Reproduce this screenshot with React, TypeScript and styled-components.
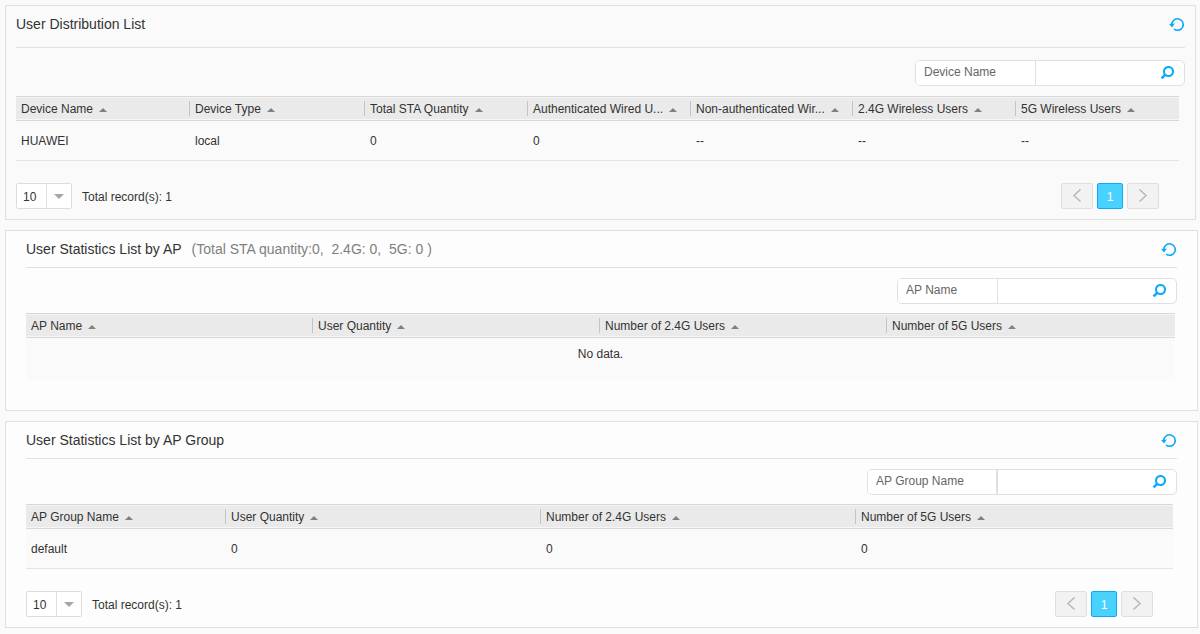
import React from "react";
import styled, { createGlobalStyle } from "styled-components";

const GlobalStyle = createGlobalStyle`
  *, *::before, *::after { box-sizing: border-box; }
  body {
    margin: 0;
    background: #fafafa;
    color: #333;
    font-family: Arial, "Liberation Sans", sans-serif;
    font-size: 12px;
    line-height: 16px;
  }
  button, input, select { font: inherit; color: inherit; margin: 0; padding: 0; }
`;

const Page = styled.main`
  display: flex;
  flex-direction: column;
  gap: 10px;
  padding: 5px 2px 6px 5px;
`;

const Panel = styled.section<{ $compact?: boolean; $bottom: number }>`
  border: 1px solid #e0e0e0;
  background: ${(p) => (p.$compact ? "#fafafa" : "#fdfdfd")};
  padding: 0 ${(p) => (p.$compact ? 10 : 20)}px ${(p) => p.$bottom}px;
  margin-right: ${(p) => (p.$compact ? 2 : 0)}px;
`;

const PanelHeader = styled.header<{ $compact?: boolean }>`
  display: flex;
  justify-content: space-between;
  align-items: center;
  padding-bottom: ${(p) => (p.$compact ? 5 : 0)}px;
  border-bottom: 1px solid #e0e0e0;
`;

const Title = styled.h2`
  margin: 0;
  font-size: 14px;
  font-weight: 400;
  line-height: 36px;
`;

const Summary = styled.span`
  margin-left: 10px;
  color: #808080;
  white-space: pre;
`;

const IconButton = styled.button`
  display: flex;
  border: 0;
  background: none;
  color: #0caafb;
  cursor: pointer;
`;

const SearchRow = styled.div<{ $compact?: boolean }>`
  display: flex;
  justify-content: flex-end;
  padding: ${(p) => (p.$compact ? "12px 0 10px" : "10px 0 9px")};
`;

const SearchBox = styled.form`
  display: flex;
  height: 26px;
  border: 1px solid #e0e0e0;
  border-radius: 5px;
  background: #fff;
  overflow: hidden;
`;

const FieldSelect = styled.select<{ $width: number; $divider: number }>`
  appearance: none;
  width: ${(p) => p.$width}px;
  padding: 0 8px 2px;
  border: 0;
  border-right: ${(p) => p.$divider}px solid #e0e0e0;
  background: #fff;
  color: #666;
  outline: none;
`;

const SearchEntry = styled.div<{ $width: number }>`
  display: flex;
  align-items: center;
  width: ${(p) => p.$width}px;
  padding-right: 10px;
`;

const SearchInput = styled.input`
  flex: 1;
  min-width: 0;
  height: 100%;
  padding-left: 8px;
  border: 0;
  background: none;
  outline: none;
`;

const TableArea = styled.div<{ $inset: number }>`
  margin-right: ${(p) => p.$inset}px;
`;

const Table = styled.table`
  width: 100%;
  table-layout: fixed;
  border-collapse: separate;
  border-spacing: 0;
`;

const Col = styled.col<{ $width: number }>`
  width: ${(p) => p.$width}px;
`;

const HeadCell = styled.th`
  height: 25px;
  padding: 0;
  border: solid #d8d8d8;
  border-width: 1px 0;
  background: #eaeaea;
  box-shadow: inset 0 1px #f3f3f3, inset 0 -1px #f6f6f6;
  font-weight: 400;
  text-align: left;
`;

const SortButton = styled.button`
  display: flex;
  align-items: center;
  gap: 6px;
  height: 15px;
  padding: 2px 0 0 5px;
  border: 0;
  background: none;
  white-space: nowrap;
  line-height: 15px;
  cursor: pointer;

  ${HeadCell} + ${HeadCell} > & {
    border-left: 1px solid #c4c4c4;
  }
`;

const SortArrow = styled.span`
  border: solid transparent;
  border-width: 0 4px 4px;
  border-bottom-color: #808080;
`;

const Cell = styled.td`
  height: 40px;
  padding: 0 5px;
  border-bottom: 1px solid #e4e4e4;
  background: #fafafa;

  & + & { padding-left: 6px; }
`;

const EmptyCell = styled.td`
  height: 42px;
  padding: 0 0 10px;
  background: #fafafa;
  text-align: center;
`;

const Footer = styled.div`
  display: flex;
  align-items: center;
  gap: 10px;
  padding: 22px 20px 0 0;
`;

const Total = styled.span`
  padding-top: 2px;
`;

const SizePicker = styled.div`
  display: grid;
  width: 56px;
  height: 26px;
  border: 1px solid #dcdcdc;
  border-radius: 2px;
  background: #fff;

  & > * { grid-area: 1 / 1; }
`;

const SizeSelect = styled.select`
  appearance: none;
  width: 100%;
  height: 100%;
  padding: 2px 6px 0;
  border: 0;
  background: none;
  outline: none;
`;

const SizeArrow = styled.span`
  display: flex;
  align-items: center;
  justify-content: center;
  justify-self: end;
  width: 25px;
  border-left: 1px solid #e0e0e0;
  pointer-events: none;

  &::after {
    content: "";
    border: solid transparent;
    border-width: 5px 5px 0;
    border-top-color: #a6a6a6;
  }
`;

const Pager = styled.nav`
  display: flex;
  gap: 4px;
  margin-left: auto;
`;

const PageButton = styled.button<{ $current?: boolean }>`
  display: flex;
  align-items: center;
  justify-content: center;
  width: ${(p) => (p.$current ? 26 : 32)}px;
  height: 26px;
  padding-top: ${(p) => (p.$current ? 2 : 0)}px;
  border: 1px solid ${(p) => (p.$current ? "#0caafb" : "#dfdfdf")};
  border-radius: 2px;
  background: ${(p) => (p.$current ? "#4ad2ff" : "#f2f2f2")};
  color: ${(p) => (p.$current ? "#fff" : "#b8b8b8")};
`;

const RefreshIcon = () => (
  <svg width="16" height="16" viewBox="0 0 16 16" fill="none" aria-hidden="true">
    <path d="M2.75 8.5A5.75 5.75 0 1 1 5 13.1" stroke="currentColor" strokeWidth="1.6" />
    <path d="M0 8L5.8 7.4L3.2 11.4Z" fill="currentColor" />
  </svg>
);

const SearchIcon = () => (
  <svg width="14" height="14" viewBox="0 0 14 14" fill="none" stroke="currentColor" aria-hidden="true">
    <circle cx="8.5" cy="5.5" r="4.5" strokeWidth="2.1" />
    <path d="M5.3 8.7L1.6 12.4" strokeWidth="2.6" />
  </svg>
);

const Chevron = ({ d }: { d: string }) => (
  <svg width="10" height="14" viewBox="0 0 10 14" fill="none" stroke="currentColor" strokeWidth="1.5" aria-hidden="true">
    <path d={d} />
  </svg>
);

type Column = { label: string; width: number };

type ListPanelProps = {
  title: string;
  summary?: string;
  compact?: boolean;
  field: string;
  fieldWidth: number;
  entryWidth: number;
  divider?: number;
  inset: number;
  columns: Column[];
  rows: string[][];
};

function ListPanel(props: ListPanelProps) {
  const { title, summary, compact, field, fieldWidth, entryWidth, divider = 1, inset, columns, rows } = props;
  return (
    <Panel $compact={compact} $bottom={rows.length ? 10 : 30}>
      <PanelHeader $compact={compact}>
        <Title>
          {title}
          {summary && <Summary>{summary}</Summary>}
        </Title>
        <IconButton type="button" aria-label="Refresh">
          <RefreshIcon />
        </IconButton>
      </PanelHeader>
      <SearchRow $compact={compact}>
        <SearchBox onSubmit={(e) => e.preventDefault()}>
          <FieldSelect $width={fieldWidth} $divider={divider} aria-label="Search field">
            <option>{field}</option>
          </FieldSelect>
          <SearchEntry $width={entryWidth}>
            <SearchInput type="text" aria-label={`Search by ${field}`} />
            <IconButton type="submit" aria-label="Search">
              <SearchIcon />
            </IconButton>
          </SearchEntry>
        </SearchBox>
      </SearchRow>
      <TableArea $inset={inset}>
        <Table>
          <colgroup>
            {columns.map((c) => (
              <Col key={c.label} $width={c.width} />
            ))}
          </colgroup>
          <thead>
            <tr>
              {columns.map((c) => (
                <HeadCell key={c.label} scope="col">
                  <SortButton type="button">
                    {c.label}
                    <SortArrow />
                  </SortButton>
                </HeadCell>
              ))}
            </tr>
          </thead>
          <tbody>
            {rows.map((row) => (
              <tr key={row[0]}>
                {row.map((value, i) => (
                  <Cell key={i}>{value}</Cell>
                ))}
              </tr>
            ))}
            {rows.length === 0 && (
              <tr>
                <EmptyCell colSpan={columns.length}>No data.</EmptyCell>
              </tr>
            )}
          </tbody>
        </Table>
        {rows.length > 0 && (
          <Footer>
            <SizePicker>
              <SizeSelect aria-label="Records per page">
                <option>10</option>
              </SizeSelect>
              <SizeArrow />
            </SizePicker>
            <Total>Total record(s): {rows.length}</Total>
            <Pager aria-label="Pages">
              <PageButton type="button" aria-label="Previous page">
                <Chevron d="M8.5 0.5L2 6.5L8.5 12.5" />
              </PageButton>
              <PageButton type="button" $current aria-current="page">
                1
              </PageButton>
              <PageButton type="button" aria-label="Next page">
                <Chevron d="M1.5 0.5L8 6.5L1.5 12.5" />
              </PageButton>
            </Pager>
          </Footer>
        )}
      </TableArea>
    </Panel>
  );
}

export default function App() {
  return (
    <>
      <GlobalStyle />
      <Page>
        <ListPanel
          compact
          title="User Distribution List"
          field="Device Name"
          fieldWidth={120}
          entryWidth={148}
          inset={6}
          columns={[
            { label: "Device Name", width: 173 },
            { label: "Device Type", width: 175 },
            { label: "Total STA Quantity", width: 163 },
            { label: "Authenticated Wired U...", width: 163 },
            { label: "Non-authenticated Wir...", width: 162 },
            { label: "2.4G Wireless Users", width: 163 },
            { label: "5G Wireless Users", width: 164 },
          ]}
          rows={[["HUAWEI", "local", "0", "0", "--", "--", "--"]]}
        />
        <ListPanel
          title="User Statistics List by AP"
          summary="(Total STA quantity:0,  2.4G: 0,  5G: 0 )"
          field="AP Name"
          fieldWidth={100}
          entryWidth={178}
          inset={2}
          columns={[
            { label: "AP Name", width: 286 },
            { label: "User Quantity", width: 287 },
            { label: "Number of 2.4G Users", width: 287 },
            { label: "Number of 5G Users", width: 289 },
          ]}
          rows={[]}
        />
        <ListPanel
          title="User Statistics List by AP Group"
          field="AP Group Name"
          fieldWidth={130}
          entryWidth={178}
          divider={2}
          inset={4}
          columns={[
            { label: "AP Group Name", width: 199 },
            { label: "User Quantity", width: 315 },
            { label: "Number of 2.4G Users", width: 315 },
            { label: "Number of 5G Users", width: 318 },
          ]}
          rows={[["default", "0", "0", "0"]]}
        />
      </Page>
    </>
  );
}
